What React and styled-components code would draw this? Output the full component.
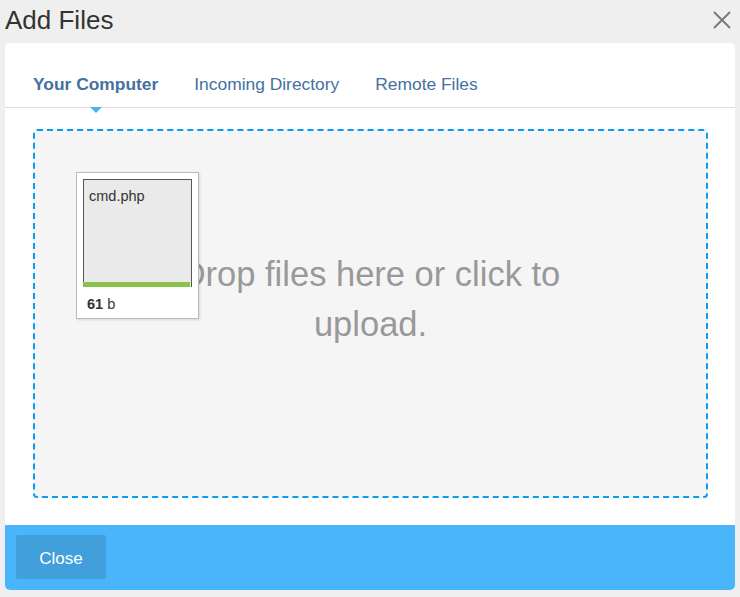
import React from 'react';
import styled, { createGlobalStyle } from 'styled-components';

const Global = createGlobalStyle`
  html, body {
    margin: 0;
    padding: 0;
    background: #efefef;
    font-family: "Liberation Sans", Arial, sans-serif;
  }
`;

const Page = styled.div`
  width: 740px;
  height: 597px;
  display: flex;
  flex-direction: column;
  padding: 0 5px 7px 5px;
  box-sizing: border-box;
`;

const Header = styled.div`
  height: 43px;
  display: flex;
  align-items: center;
  justify-content: space-between;
`;

const Title = styled.h1`
  margin: 0;
  font-size: 26px;
  font-weight: normal;
  color: #333;
  line-height: 30px;
  margin-top: -4px;
`;

const CloseX = styled.button`
  border: 0;
  background: none;
  padding: 0;
  width: 22px;
  height: 22px;
  margin-right: 2px;
  margin-top: -3px;
  cursor: pointer;
  display: flex;
`;

const Panel = styled.div`
  flex: 1;
  background: #fff;
  border-radius: 5px;
  display: flex;
  flex-direction: column;
  overflow: hidden;
`;

const TabList = styled.ul`
  list-style: none;
  margin: 0;
  padding: 30px 0 12px 10px;
  display: flex;
  border-bottom: 1px solid #ddd;
`;

const Tab = styled.li`
  position: relative;
  padding: 0 18px;
  font-size: 17.4px;
  line-height: 22px;
  color: #44719f;
  font-weight: ${(p) => (p.active ? 'bold' : 'normal')};
  cursor: pointer;

  ${(p) =>
    p.active &&
    `
    &::after {
      content: '';
      position: absolute;
      left: 50%;
      bottom: -18px;
      margin-left: -6px;
      border-left: 6px solid transparent;
      border-right: 6px solid transparent;
      border-top: 6px solid #47b2f4;
    }
  `}
`;

const Body = styled.div`
  flex: 1;
  padding: 21px 27px 27px 28px;
  display: flex;
`;

const DropZone = styled.div`
  position: relative;
  flex: 1;
  border: 2px dashed #0b9bf4;
  border-radius: 4px;
  background: #f5f5f5;
  display: flex;
  align-items: center;
  justify-content: center;
  padding-bottom: 30px;
  box-sizing: border-box;
`;

const DropText = styled.div`
  max-width: 420px;
  text-align: center;
  font-size: 34.5px;
  line-height: 50px;
  color: #999;
`;

const FileCard = styled.div`
  position: absolute;
  left: 41px;
  top: 41px;
  width: 123px;
  height: 147px;
  box-sizing: border-box;
  background: #fff;
  border: 1px solid #bbb;
  box-shadow: 1px 1px 2px rgba(0, 0, 0, 0.12);
  padding: 6px;
  display: flex;
  flex-direction: column;
`;

const Thumb = styled.div`
  height: 108px;
  box-sizing: border-box;
  background: #eaeaea;
  border: 1px solid #555;
  border-bottom: 0;
  display: flex;
  flex-direction: column;
`;

const FileName = styled.div`
  flex: 1;
  padding: 8px 5px;
  font-size: 14.5px;
  color: #333;
`;

const Progress = styled.div`
  height: 5px;
  margin: 0 -1px;
  background: #8bc34a;
  width: ${(p) => p.value}%;
`;

const Size = styled.div`
  padding: 9px 4px 0;
  font-size: 14.5px;
  color: #333;

  b {
    font-weight: bold;
  }
`;

const Footer = styled.div`
  background: #4ab5fb;
  height: 65px;
  padding: 10px 11px;
  box-sizing: border-box;
  display: flex;
  align-items: flex-start;
`;

const Button = styled.button`
  width: 90px;
  height: 44px;
  padding: 3px 0 0;
  border: 0;
  border-radius: 2px;
  background: #419fdc;
  color: #fff;
  font-family: "Liberation Sans", Arial, sans-serif;
  font-size: 17px;
  cursor: pointer;
`;

export default function App() {
  return (
    <>
      <Global />
      <Page>
        <Header>
          <Title>Add Files</Title>
          <CloseX aria-label="close">
            <svg width="22" height="22" viewBox="0 0 22 22">
              <path d="M3 3 L19 19 M19 3 L3 19" stroke="#7a7a7a" strokeWidth="2" />
            </svg>
          </CloseX>
        </Header>
        <Panel>
          <TabList>
            <Tab active>Your Computer</Tab>
            <Tab>Incoming Directory</Tab>
            <Tab>Remote Files</Tab>
          </TabList>
          <Body>
            <DropZone>
              <DropText>Drop files here or click to upload.</DropText>
              <FileCard>
                <Thumb>
                  <FileName>cmd.php</FileName>
                  <Progress value={100} />
                </Thumb>
                <Size>
                  <b>61</b> b
                </Size>
              </FileCard>
            </DropZone>
          </Body>
          <Footer>
            <Button>Close</Button>
          </Footer>
        </Panel>
      </Page>
    </>
  );
}
